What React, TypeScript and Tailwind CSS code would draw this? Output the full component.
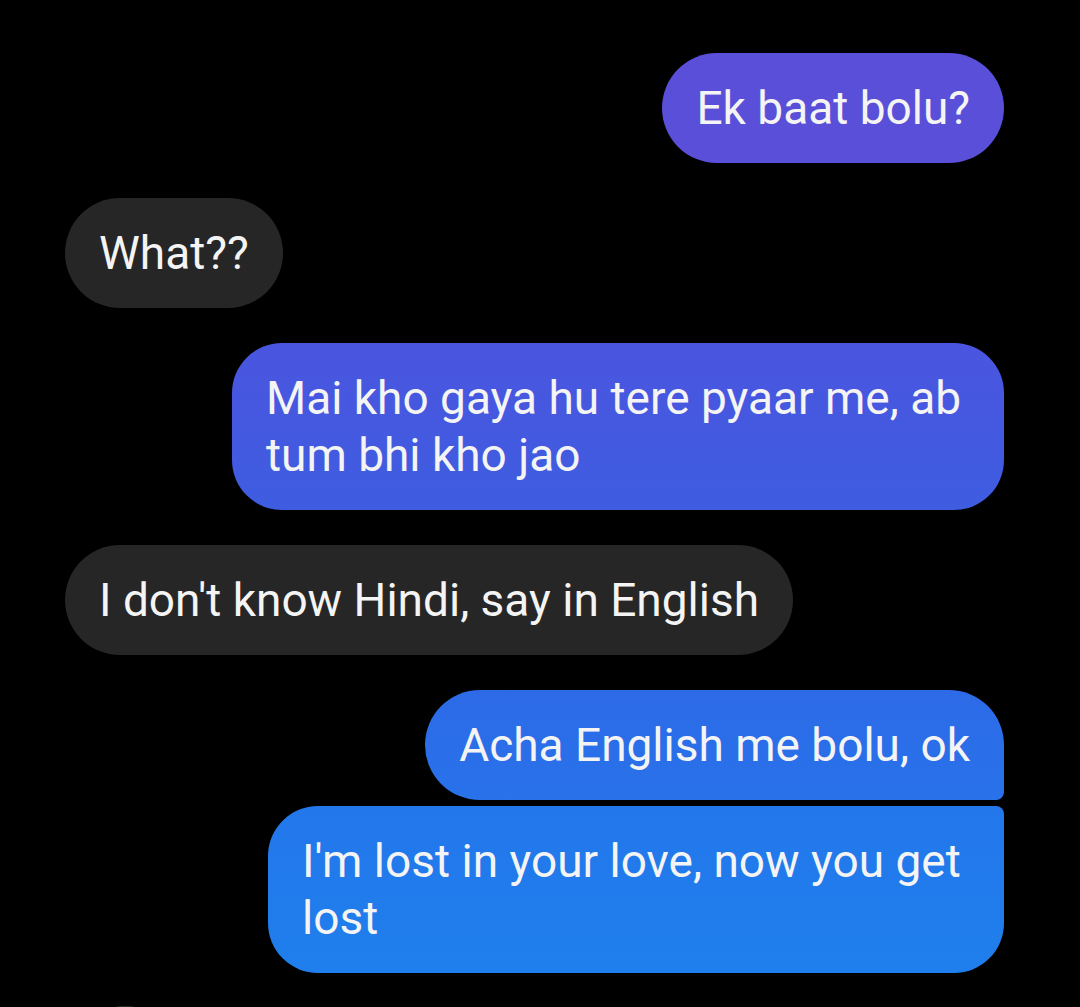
import React from 'react';

type Msg = {
  text: string;
  mine: boolean;
  className: string;
};

const messages: Msg[] = [
  { text: 'Ek baat bolu?', mine: true, className: 'bg-[#5a4fd9] rounded-full mb-[35px]' },
  { text: 'What??', mine: false, className: 'bg-[#262626] rounded-full mb-[35px]' },
  {
    text: 'Mai kho gaya hu tere pyaar me, ab tum bhi kho jao',
    mine: true,
    className: 'w-[772px] bg-linear-to-b from-[#4a55df] to-[#3e5de1] rounded-[50px] mb-[35px]',
  },
  { text: "I don't know Hindi, say in English", mine: false, className: 'bg-[#262626] rounded-full mb-[35px]' },
  {
    text: 'Acha English me bolu, ok',
    mine: true,
    className: 'bg-linear-to-b from-[#2d6ae7] to-[#2872ea] rounded-l-[55px] rounded-tr-[55px] rounded-br-[8px] mb-[6px]',
  },
  {
    text: "I'm lost in your love, now you get lost",
    mine: true,
    className: 'w-[736px] bg-linear-to-b from-[#2377eb] to-[#1f7fec] rounded-[50px] rounded-tr-[8px]',
  },
];

export default function App() {
  return (
    <div className="h-[1007px] w-[1080px] overflow-hidden bg-black pt-[53px] pl-[65px] pr-[76px] font-['Roboto',sans-serif]">
      <div className="flex flex-col">
        {messages.map((m, i) => (
          <div key={i} className={m.mine ? 'flex justify-end' : 'flex justify-start'}>
            <div
              className={`px-[34px] py-[26.5px] text-[46px] leading-[57px] text-[#f4f4f4] ${m.className}`}
            >
              {m.text}
            </div>
          </div>
        ))}
        {/* next bubble peeking in at the bottom edge */}
        <div className="mt-[33px] ml-[32px] h-[50px] w-[56px] rounded-full bg-[#2a2a2a]" />
      </div>
    </div>
  );
}
